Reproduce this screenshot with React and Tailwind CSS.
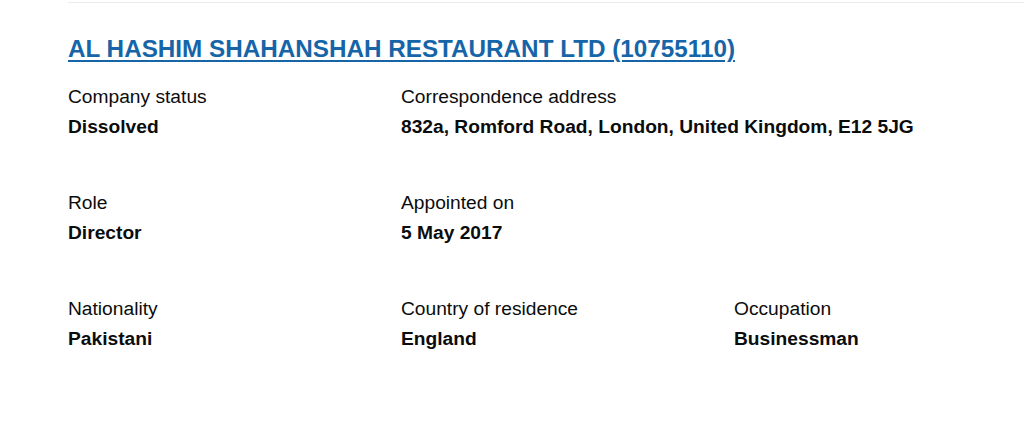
export default function App() {
  const rows = [
    [
      { label: 'Company status', value: 'Dissolved' },
      { label: 'Correspondence address', value: '832a, Romford Road, London, United Kingdom, E12 5JG', wide: true },
    ],
    [
      { label: 'Role', value: 'Director' },
      { label: 'Appointed on', value: '5 May 2017' },
    ],
    [
      { label: 'Nationality', value: 'Pakistani' },
      { label: 'Country of residence', value: 'England' },
      { label: 'Occupation', value: 'Businessman' },
    ],
  ];

  return (
    <div className="w-full h-[423px] overflow-hidden bg-white text-[#0b0c0c] font-['Liberation_Sans',Arial,sans-serif]">
      <div className="ml-[68px] mt-[2px] border-t border-[#ebebeb] pt-[31px]">
        <h2 className="text-[24.25px] leading-[30px] font-bold">
          <a href="#" className="text-[#1565a8] underline underline-offset-[3px] decoration-[2px]">
            AL HASHIM SHAHANSHAH RESTAURANT LTD (10755110)
          </a>
        </h2>
        <div className="mt-[20px] flex flex-col gap-[51px]">
          {rows.map((row, i) => (
            <div key={i} className="flex">
              {row.map((item) => (
                <dl key={item.label} className={item.wide ? 'w-[600px] shrink-0' : 'w-[333px] shrink-0'}>
                  <dt className="text-[19.2px] leading-[25px]">{item.label}</dt>
                  <dd className="mt-[5px] text-[19.2px] leading-[25px] font-bold">{item.value}</dd>
                </dl>
              ))}
            </div>
          ))}
        </div>
      </div>
    </div>
  );
}
